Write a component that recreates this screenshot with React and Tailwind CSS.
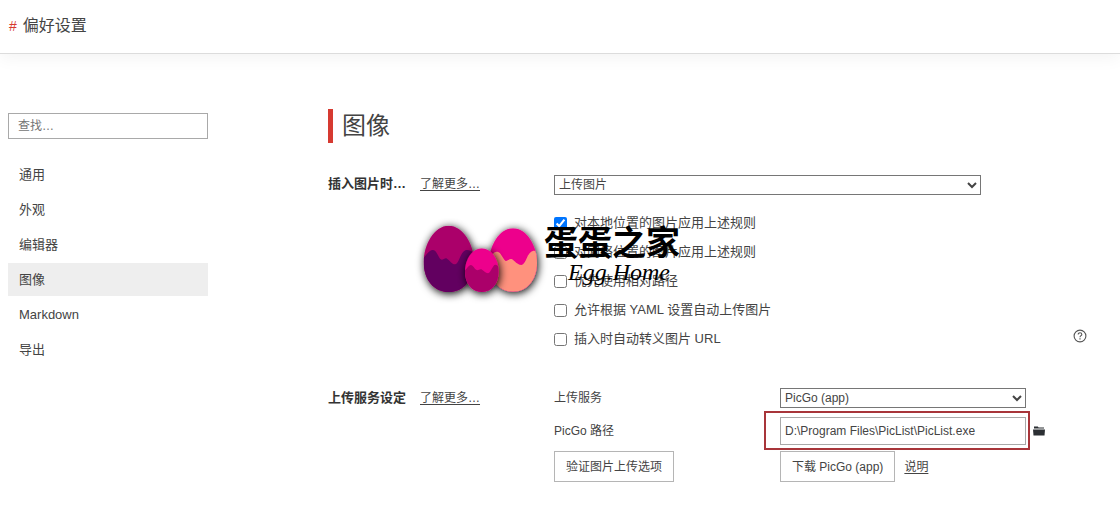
import React, { useState } from "react";

/* ---------- Data ---------- */
const MENU = ["通用", "外观", "编辑器", "图像", "Markdown", "导出"];

const RULES = [
  { id: "local", label: "对本地位置的图片应用上述规则", checked: true },
  { id: "online", label: "对网络位置的图片应用上述规则" },
  { id: "relative", label: "优先使用相对路径" },
  { id: "yaml", label: "允许根据 YAML 设置自动上传图片" },
  { id: "escape", label: "插入时自动转义图片 URL", help: true },
];

/* ---------- Components ---------- */
const NavItem = ({ label, active, onClick }) => (
  <a
    href="#"
    onClick={onClick}
    className={`flex items-center h-[33px] px-[11px] text-[13px] ${
      active ? "bg-[#eeeeee]" : "hover:bg-gray-100"
    }`}
  >
    {label}
  </a>
);

const SectionLabel = ({ title }) => (
  <div className="flex items-center w-[226px] h-5 shrink-0">
    <h3 className="w-[92px] text-[13px] font-bold text-[#333] whitespace-nowrap">{title}</h3>
    <a href="#" className="text-xs underline underline-offset-2">
      了解更多…
    </a>
  </div>
);

const HelpIcon = () => (
  <svg viewBox="0 0 14 14" className="w-3.5 h-3.5" fill="none" stroke="#555">
    <circle cx="7" cy="7" r="5.9" strokeWidth="1.1" />
    <path d="M5.2 5.5C5.2 4.4 6 3.8 7 3.8s1.8.6 1.8 1.6C8.8 6.7 7 6.7 7 8.2" strokeWidth="1.1" />
    <path d="M7 9.2v1.2" strokeWidth="1.2" />
  </svg>
);

const FolderIcon = () => (
  <svg viewBox="0 0 12 10" className="w-3 h-2.5" fill="#2b2f33">
    <path d="M1 .5H4.8L5.6 1.5H11V2.6H1Z" />
    <path d="M0 3.4H12L11.5 9.6H.5Z" />
  </svg>
);

const Eggs = () => (
  <svg viewBox="0 0 420 300" className="w-[140px] h-[100px] shrink-0">
    <defs>
      <filter id="eggShadow" x="-40%" y="-40%" width="180%" height="180%">
        <feDropShadow dx="3" dy="5" stdDeviation="12" floodColor="#000" floodOpacity="1" />
      </filter>
      <clipPath id="eggLeft">
        <path d="M116 47C160 47 192 105 192 155C192 210 160 246 116 246C72 246 41 210 41 155C41 105 72 47 116 47Z" />
      </clipPath>
      <clipPath id="eggRight">
        <path d="M309 55C350 55 381 108 381 158C381 210 350 245 309 245C268 245 237 210 237 158C237 108 268 55 309 55Z" />
      </clipPath>
      <clipPath id="eggMid">
        <path d="M215 115C245 115 266 150 266 184C266 222 245 246 215 246C186 246 165 222 165 184C165 150 186 115 215 115Z" />
      </clipPath>
    </defs>
    <g filter="url(#eggShadow)">
      <g clipPath="url(#eggLeft)">
        <path d="M30 40H200V250H30Z" fill="#ab006b" />
        <path
          d="M38 146C48 138 56 120 68 120C80 120 84 140 92 148C98 153 104 142 111 146C120 151 126 164 136 163C148 160 150 128 166 121C176 118 186 124 196 132V250H38Z"
          fill="#620060"
        />
      </g>
    </g>
    <g filter="url(#eggShadow)">
      <g clipPath="url(#eggRight)">
        <path d="M230 50H390V250H230Z" fill="#ed008c" />
        <path
          d="M234 142C246 138 250 124 262 125C274 128 276 142 286 152C292 156 298 144 306 148C314 152 320 164 334 165C350 162 350 126 370 122C376 122 382 126 386 132V250H234Z"
          fill="#ff917d"
        />
      </g>
    </g>
    <g filter="url(#eggShadow)">
      <g clipPath="url(#eggMid)">
        <path d="M160 110H270V250H160Z" fill="#ed008c" />
        <path
          d="M160 184C170 180 174 166 182 165C190 166 194 178 200 180C206 182 208 176 214 178C222 182 226 190 234 190C244 186 248 164 256 164C262 164 266 170 270 174V250H160Z"
          fill="#ab006b"
        />
      </g>
    </g>
  </svg>
);

const Watermark = () => (
  <div className="absolute top-[210px] left-[410px] flex text-black pointer-events-none">
    <Eggs />
    <div className="-ml-1.5 pt-4">
      <p className="text-[34px] leading-[34px] font-bold whitespace-nowrap">蛋蛋之家</p>
      <p className="pl-6 font-['Liberation_Serif',serif] italic text-2xl leading-6">
        Egg.Home
      </p>
    </div>
  </div>
);

export default function App() {
  const [active, setActive] = useState("图像");
  const [path, setPath] = useState("D:\\Program Files\\PicList\\PicList.exe");

  return (
    <div className="relative min-h-screen bg-white text-[#444] font-['Liberation_Sans','Noto_Sans_CJK_SC',sans-serif]">
      <header className="flex items-center h-[54px] px-[9px] pb-0.5 gap-1.5 border-b border-[#dcdcdc] shadow-[0_4px_16px_rgba(0,0,0,0.05)]">
        <span className="text-sm text-[#d63a31]">#</span>
        <h1 className="text-base">偏好设置</h1>
      </header>

      <div className="flex pl-2 pr-8">
        {/* Sidebar */}
        <aside className="w-[200px] mr-[120px] pt-[59px] shrink-0">
          <input
            type="search"
            aria-label="查找"
            placeholder="查找…"
            className="block w-full h-[26px] px-[9px] text-xs border border-[#a9a9a9] placeholder:text-[#757575]"
          />
          <nav className="flex flex-col gap-0.5 mt-[19px]">
            {MENU.map((item) => (
              <NavItem
                key={item}
                label={item}
                active={item === active}
                onClick={() => setActive(item)}
              />
            ))}
          </nav>
        </aside>

        {/* Main Content */}
        <main className="flex-1 pt-[55px] min-w-0">
          <h2 className="flex items-center h-[34px] pl-[9px] text-2xl border-l-5 border-[#d63a31]">
            图像
          </h2>

          <section className="flex mt-8">
            <div className="-mt-px">
              <SectionLabel title="插入图片时…" />
            </div>
            <div className="flex-1">
              <select
                aria-label="插入图片时"
                className="block w-4/5 h-5 text-xs border border-[#767676]"
              >
                <option>上传图片</option>
              </select>
              <div className="flex flex-col gap-[9px] mt-[18px]">
                {RULES.map((rule) => (
                  <div key={rule.id} className="flex items-center justify-between h-5">
                    <label className="flex items-center gap-[7px] text-[13px]">
                      <input
                        type="checkbox"
                        defaultChecked={rule.checked}
                        className="w-[13px] h-[13px]"
                      />
                      {rule.label}
                    </label>
                    {rule.help && (
                      <button type="button" aria-label="帮助" className="self-start mr-px">
                        <HelpIcon />
                      </button>
                    )}
                  </div>
                ))}
              </div>
            </div>
          </section>

          <section className="flex mt-[39px]">
            <SectionLabel title="上传服务设定" />
            <div className="flex-1 text-xs">
              <div className="flex items-center mb-[9px]">
                <label htmlFor="service" className="w-[226px]">
                  上传服务
                </label>
                <select id="service" className="w-[246px] h-5 border border-[#767676]">
                  <option>PicGo (app)</option>
                </select>
              </div>
              <div className="flex items-center mb-1.5">
                <label htmlFor="path" className="w-[226px]">
                  PicGo 路径
                </label>
                <div className="relative w-[246px]">
                  <input
                    id="path"
                    type="text"
                    value={path}
                    onChange={(e) => setPath(e.target.value)}
                    className="block w-full h-7 px-1 border border-[#a9a9a9]"
                  />
                  <div className="absolute -top-1.5 -bottom-[5px] -left-4 -right-1 border-2 border-[#a8353a] pointer-events-none" />
                </div>
                <button type="button" aria-label="选择文件" className="ml-[7px]">
                  <FolderIcon />
                </button>
              </div>
              <div className="flex items-center">
                <div className="w-[226px]">
                  <button type="button" className="h-[31px] px-[11px] border border-[#b5b5b5]">
                    验证图片上传选项
                  </button>
                </div>
                <button type="button" className="h-[31px] px-[11px] border border-[#b5b5b5]">
                  下载 PicGo (app)
                </button>
                <a href="#" className="ml-[9px] underline underline-offset-2">
                  说明
                </a>
              </div>
            </div>
          </section>
        </main>
      </div>

      <Watermark />
    </div>
  );
}
